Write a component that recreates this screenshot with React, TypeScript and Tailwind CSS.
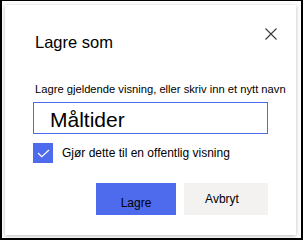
import React from "react";

export default function App() {
  return (
    <div className="w-[303px] h-[240px] box-border border-t border-x-2 border-b-2 border-black bg-white pt-[4px] pl-[3px] pr-[5px] pb-[3px] font-['Liberation_Sans',Arial,sans-serif] text-[#201f1e]">
      <div className="w-[291px] h-[230px] bg-white shadow-[0_1px_4px_rgba(0,0,0,0.28)] flex flex-col pt-[27px] pl-[28px] pr-[28px]">
        <div className="flex justify-between items-start">
          <div className="ml-[2px] text-[16.5px] leading-[20px] text-black">Lagre som</div>
          <svg className="-mt-[4px] -mr-[9px]" width="12" height="12" viewBox="0 0 12 12">
            <path d="M0.5 0.5 L11.5 11.5 M11.5 0.5 L0.5 11.5" stroke="#3b3a39" strokeWidth="1.1" fill="none" />
          </svg>
        </div>
        <div className="mt-[30px] ml-[2px] text-[11.2px] leading-[14px] text-black whitespace-nowrap">
          Lagre gjeldende visning, eller skriv inn et nytt navn
        </div>
        <div className="mt-[6px] h-[32px] box-border border border-[#4f6bed] overflow-hidden pl-[16px]">
          <div className="pt-[2px] text-[21px] leading-[30px] text-black">Måltider</div>
        </div>
        <div className="mt-[9px] flex items-start gap-[9px]">
          <div className="w-[20px] h-[20px] bg-[#4f6bed] shrink-0">
            <svg width="20" height="20" viewBox="0 0 20 20">
              <path d="M5 10 L8.8 13.6 L16 7" stroke="white" strokeWidth="1.2" fill="none" />
            </svg>
          </div>
          <div className="pt-[3px] text-[12px] leading-[14px] text-black whitespace-nowrap">
            Gjør dette til en offentlig visning
          </div>
        </div>
        <div className="mt-[20px] flex justify-end gap-[8px]">
          <div className="w-[80px] h-[32px] bg-[#4f6bed] flex justify-center items-start pt-[13px] text-[12px] leading-[14px] text-black">
            Lagre
          </div>
          <div className="w-[84px] h-[32px] bg-[#f3f2f1] flex justify-center items-start pt-[9px] pr-[8px] text-[12px] leading-[14px] text-black">
            Avbryt
          </div>
        </div>
      </div>
    </div>
  );
}
